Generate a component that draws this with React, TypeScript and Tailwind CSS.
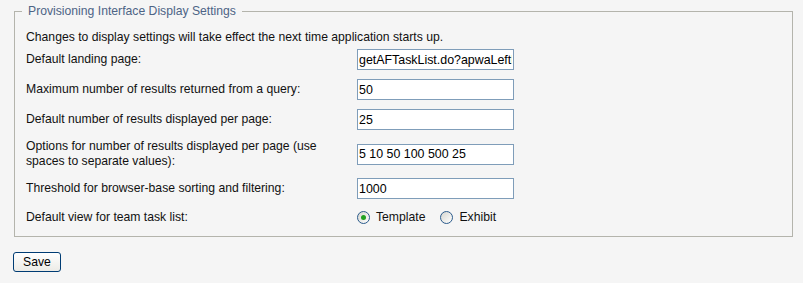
import {useState} from "react";

const rows = [
    {label: "Default landing page:", value: "getAFTaskList.do?apwaLeftNav=true"},
    {label: "Maximum number of results returned from a query:", value: "50"},
    {label: "Default number of results displayed per page:", value: "25"},
    {label: "Options for number of results displayed per page (use spaces to separate values):", value: "5 10 50 100 500 25"},
    {label: "Threshold for browser-base sorting and filtering:", value: "1000"},
];

function Radio({checked, label, onClick}: {checked: boolean; label: string; onClick: () => void}) {
    return (
        <label className="flex items-center gap-[6px] cursor-pointer" onClick={onClick}>
            <span className="w-[13px] h-[13px] rounded-full border border-[#2b5b8c] bg-gradient-to-br from-[#d6d6d0] to-white flex items-center justify-center">
                {checked && <span className="w-[5px] h-[5px] rounded-full bg-[#21a121]" />}
            </span>
            <span>{label}</span>
        </label>
    );
}

function App() {
    const [view, setView] = useState("template");

    return (
        <div className="w-full h-[283px] bg-[#f5f5f5] pt-[4px] text-[12.2px] leading-[15px] text-[#111] font-['Liberation_Sans',Arial,sans-serif]">
            <fieldset className="ml-[14px] w-[779px] border border-[#b4b4ac] px-[11px] pb-[10px]">
                <legend className="ml-[-4px] px-[6px] text-[#4d6485]">Provisioning Interface Display Settings</legend>
                <p className="mt-[11px] mb-[4px]">Changes to display settings will take effect the next time application starts up.</p>

                <div className="flex flex-col gap-[9px]">
                    {rows.map((row) => (
                        <div key={row.label} className="flex items-center min-h-[21px]">
                            <span className="w-[320px] mr-[11px]">{row.label}</span>
                            <input
                                defaultValue={row.value}
                                className="w-[157px] h-[21px] px-[1px] border border-[#7f9db9] bg-white text-[12.4px] text-black outline-none"
                            />
                        </div>
                    ))}
                    <div className="flex items-center h-[18px]">
                        <span className="w-[320px] mr-[11px]">Default view for team task list:</span>
                        <div className="flex items-center gap-[15px]">
                            <Radio checked={view === "template"} label="Template" onClick={() => setView("template")} />
                            <Radio checked={view === "exhibit"} label="Exhibit" onClick={() => setView("exhibit")} />
                        </div>
                    </div>
                </div>
            </fieldset>

            <button className="mt-[15px] ml-[13px] w-[48px] h-[20px] rounded-[3px] border border-[#003c74] bg-gradient-to-b from-white to-[#ecebe6] text-[12.2px] leading-[15px] text-black">
                Save
            </button>
        </div>
    );
}

export default App;
